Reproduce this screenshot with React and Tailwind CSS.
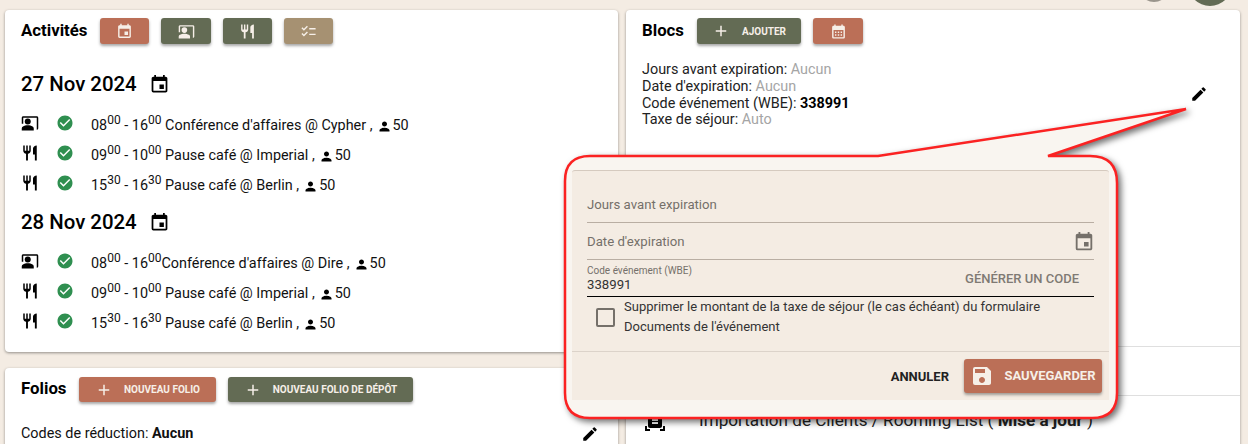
import {
  MdEvent,
  MdCoPresent,
  MdRestaurant,
  MdChecklist,
  MdCheckCircle,
  MdPerson,
  MdEdit,
  MdAdd,
  MdCalendarMonth,
  MdSave,
  MdDocumentScanner,
} from 'react-icons/md';

const days = [
  {
    date: '27 Nov 2024',
    rows: [
      { icon: MdCoPresent, from: ['08', '00'], to: ['16', '00'], text: "Conférence d'affaires @ Cypher", gap: true },
      { icon: MdRestaurant, from: ['09', '00'], to: ['10', '00'], text: 'Pause café @ Imperial', gap: true },
      { icon: MdRestaurant, from: ['15', '30'], to: ['16', '30'], text: 'Pause café @ Berlin', gap: true },
    ],
  },
  {
    date: '28 Nov 2024',
    rows: [
      { icon: MdCoPresent, from: ['08', '00'], to: ['16', '00'], text: "Conférence d'affaires @ Dire", gap: false },
      { icon: MdRestaurant, from: ['09', '00'], to: ['10', '00'], text: 'Pause café @ Imperial', gap: true },
      { icon: MdRestaurant, from: ['15', '30'], to: ['16', '30'], text: 'Pause café @ Berlin', gap: true },
    ],
  },
];

const IconButton = ({ icon: Icon, color, width = 'w-[49px]', size = 17 }) => (
  <button className={`${width} ${color} h-[26px] rounded-[3px] shadow-[0_2px_3px_rgba(0,0,0,0.35)] text-[#f6efe8] flex items-center justify-center`}>
    <Icon size={size} />
  </button>
);

const LabelButton = ({ label, color, width }) => (
  <button className={`${width} ${color} gap-[11px] h-[25px] rounded-[3px] shadow-[0_2px_3px_rgba(0,0,0,0.35)] text-[#f6efe8] flex items-center justify-center text-[10px] font-bold`}>
    <MdAdd size={18} />
    <span>{label}</span>
  </button>
);

const Sup = ({ parts }) => (
  <>
    {parts[0]}
    <sup className="text-[12px]">{parts[1]}</sup>
  </>
);

const ActivityRow = ({ row }) => {
  const Icon = row.icon;
  return (
    <div className="flex items-center h-[30px] text-[14.4px] text-[#111]">
      <Icon size={18} className="w-[18px] -mt-[4px] text-black" />
      <MdCheckCircle size={18} className="ml-[17px] -mt-[4px] text-[#2f8f50]" />
      <span className="ml-[17px] mt-[2px] whitespace-nowrap">
        <Sup parts={row.from} /> - <Sup parts={row.to} />
        {row.gap ? ' ' : ''}
        {row.text} ,
      </span>
      <MdPerson size={15} className="ml-[4px] mt-[2px] text-black" />
      <span className="ml-px mt-[2px]">50</span>
    </div>
  );
};

const Field = ({ label, children }) => (
  <div className="h-[37px] border-b border-[#b9aea3] flex items-center justify-between text-[13.2px] text-[#75706a] pt-[1px]">
    <span>{label}</span>
    {children}
  </div>
);

export default function App() {
  return (
    <div className="relative w-[1248px] h-[444px] overflow-hidden bg-[#f4ece3] font-['Roboto',sans-serif]">
      {/* Avatars cut off by the top of the window */}
      <div className="absolute left-[1139px] top-[-40px] w-[30px] h-[42px] rounded-full bg-[#9a958c]" />
      <div className="absolute left-[1188px] top-[-38px] w-[44px] h-[44px] rounded-full bg-[#636b54]" />

      <div className="flex gap-[8px] pl-[5px] pt-[10px]">
        {/* Left column */}
        <div className="w-[613px] flex flex-col gap-[16px]">
          <section className="h-[342px] bg-white rounded-[4px] shadow-[0_1px_3px_rgba(0,0,0,0.4)] px-[16px] pt-[8px]">
            <div className="flex items-center h-[26px]">
              <h2 className="text-[16.8px] font-bold text-black w-[79px]">Activités</h2>
              <div className="flex gap-[12px]">
                <IconButton icon={MdEvent} color="bg-[#bb6f57]" />
                <IconButton icon={MdCoPresent} color="bg-[#636b54]" width="w-[50px]" />
                <IconButton icon={MdRestaurant} color="bg-[#636b54]" />
                <IconButton icon={MdChecklist} color="bg-[#a69172]" />
              </div>
            </div>
            {days.map((day, i) => (
              <div key={day.date} className={i === 0 ? 'mt-[24px]' : 'mt-[6px]'}>
                <div className="flex items-center h-[32px] text-[20.4px] font-medium text-black">
                  {day.date}
                  <MdEvent size={21} className="ml-[12px]" />
                </div>
                <div className="mt-[10px]">
                  {day.rows.map((row, j) => (
                    <ActivityRow key={j} row={row} />
                  ))}
                </div>
              </div>
            ))}
          </section>

          <section className="h-[100px] bg-white rounded-[4px] shadow-[0_1px_3px_rgba(0,0,0,0.4)] px-[16px] pt-[9px]">
            <div className="flex items-center gap-[12px]">
              <h2 className="text-[16.8px] -mt-[2px] font-bold text-black w-[46px]">Folios</h2>
              <LabelButton label="NOUVEAU FOLIO" color="bg-[#bb6f57]" width="w-[137px]" />
              <LabelButton label="NOUVEAU FOLIO DE DÉPÔT" color="bg-[#636b54]" width="w-[185px]" />
            </div>
            <div className="flex items-center justify-between mt-[21px] text-[14.4px] text-[#111]">
              <p>
                Codes de réduction: <b>Aucun</b>
              </p>
              <MdEdit size={18} className="mr-[3px] text-black" />
            </div>
          </section>
        </div>

        {/* Right column */}
        <section className="w-[614px] h-[440px] bg-white rounded-[4px] shadow-[0_1px_3px_rgba(0,0,0,0.4)] flex flex-col">
          <div className="h-[336px] px-[16px] pt-[8px] relative">
            <div className="flex items-center h-[26px]">
              <h2 className="text-[16.8px] font-bold text-black w-[55px]">Blocs</h2>
              <button className="w-[104px] h-[26px] rounded-[3px] bg-[#636b54] shadow-[0_2px_3px_rgba(0,0,0,0.35)] text-[#f6efe8] flex items-center justify-center gap-[12px] text-[10px] font-bold">
                <MdAdd size={18} />
                <span>AJOUTER</span>
              </button>
              <div className="ml-[12px]">
                <IconButton icon={MdCalendarMonth} color="bg-[#bb6f57]" width="w-[50px]" />
              </div>
            </div>
            <div className="mt-[18px] text-[14.4px] leading-[16.8px] text-[#222]">
              <p>
                Jours avant expiration: <span className="text-[#a5a5a5]">Aucun</span>
              </p>
              <p>
                Date d'expiration: <span className="text-[#a5a5a5]">Aucun</span>
              </p>
              <p>
                Code événement (WBE): <b className="text-black">338991</b>
              </p>
              <p>
                Taxe de séjour: <span className="text-[#a5a5a5]">Auto</span>
              </p>
            </div>
          </div>
          <div className="h-[49px] border-t border-[#dfdfdf]" />
          <div className="flex-1 border-t border-[#dfdfdf] flex items-center pl-[17px] pb-[5px]">
            <MdDocumentScanner size={24} className="text-black w-[24px] -mt-[2px]" />
            <p className="ml-[32px] text-[17.1px] text-[#222]">
              Importation de Clients / Rooming List ( <b>Mise à jour</b> )
            </p>
          </div>
        </section>
      </div>

      {/* Callout outline pointing at the edit pencil */}
      <svg className="absolute inset-0 drop-shadow-[3px_3px_3px_rgba(0,0,0,0.55)]" width="1248" height="444" viewBox="0 0 1248 444">
        <path
          d="M590 156 H878 L1186 109 L1048 156 H1090 Q1117 156 1117 183 V393 Q1117 418 1092 418 H590 Q565 418 565 393 V181 Q565 156 590 156 Z"
          fill="#f9f5f0"
          stroke="#fb2222"
          strokeWidth="2.5"
        />
      </svg>
      <MdEdit size={18} className="absolute left-[1190px] top-[85px] text-black" />

      {/* Edit form */}
      <div className="absolute left-[572px] top-[170px] w-[537px] h-[230px] bg-[#f4ece3] border-t border-[#d5cabf] rounded-t-[3px] flex flex-col">
        <div className="px-[15px] pt-[15px]">
          <Field label="Jours avant expiration" />
          <Field label="Date d'expiration">
            <MdEvent size={22} className="mr-[-1px] text-[#75706a]" />
          </Field>
          <div className="h-[37px] border-b border-black flex items-end justify-between pb-[4px]">
            <div className="flex flex-col">
              <span className="text-[10px] leading-[12px] text-[#75706a]">Code événement (WBE)</span>
              <span className="text-[13.2px] leading-[15px] text-[#333]">338991</span>
            </div>
            <span className="mr-[15px] mb-[4px] text-[13px] font-medium text-[#7f7a74]">GÉNÉRER UN CODE</span>
          </div>
          <div className="flex items-center pl-[9px]">
            <div className="w-[19px] h-[19px] rounded-[2px] border-2 border-[#75706a]" />
            <p className="ml-[9px] text-[13px] leading-[20px] text-[#333]">
              Supprimer le montant de la taxe de séjour (le cas échéant) du formulaire
              <br />
              Documents de l'événement
            </p>
          </div>
        </div>
        <div className="mt-[14px] flex-1 border-t border-[#dcd3ca] flex items-start justify-end pt-[7px] pr-[7px]">
          <button className="mt-[8px] mr-[15px] text-[13px] font-bold text-[#222]">ANNULER</button>
          <button className="w-[138px] h-[34px] rounded-[3px] bg-[#bb6f57] shadow-[0_2px_3px_rgba(0,0,0,0.35)] text-[#f6efe8] flex items-center justify-center gap-[10px] text-[13px] font-bold">
            <MdSave size={24} />
            <span>SAUVEGARDER</span>
          </button>
        </div>
      </div>
    </div>
  );
}
